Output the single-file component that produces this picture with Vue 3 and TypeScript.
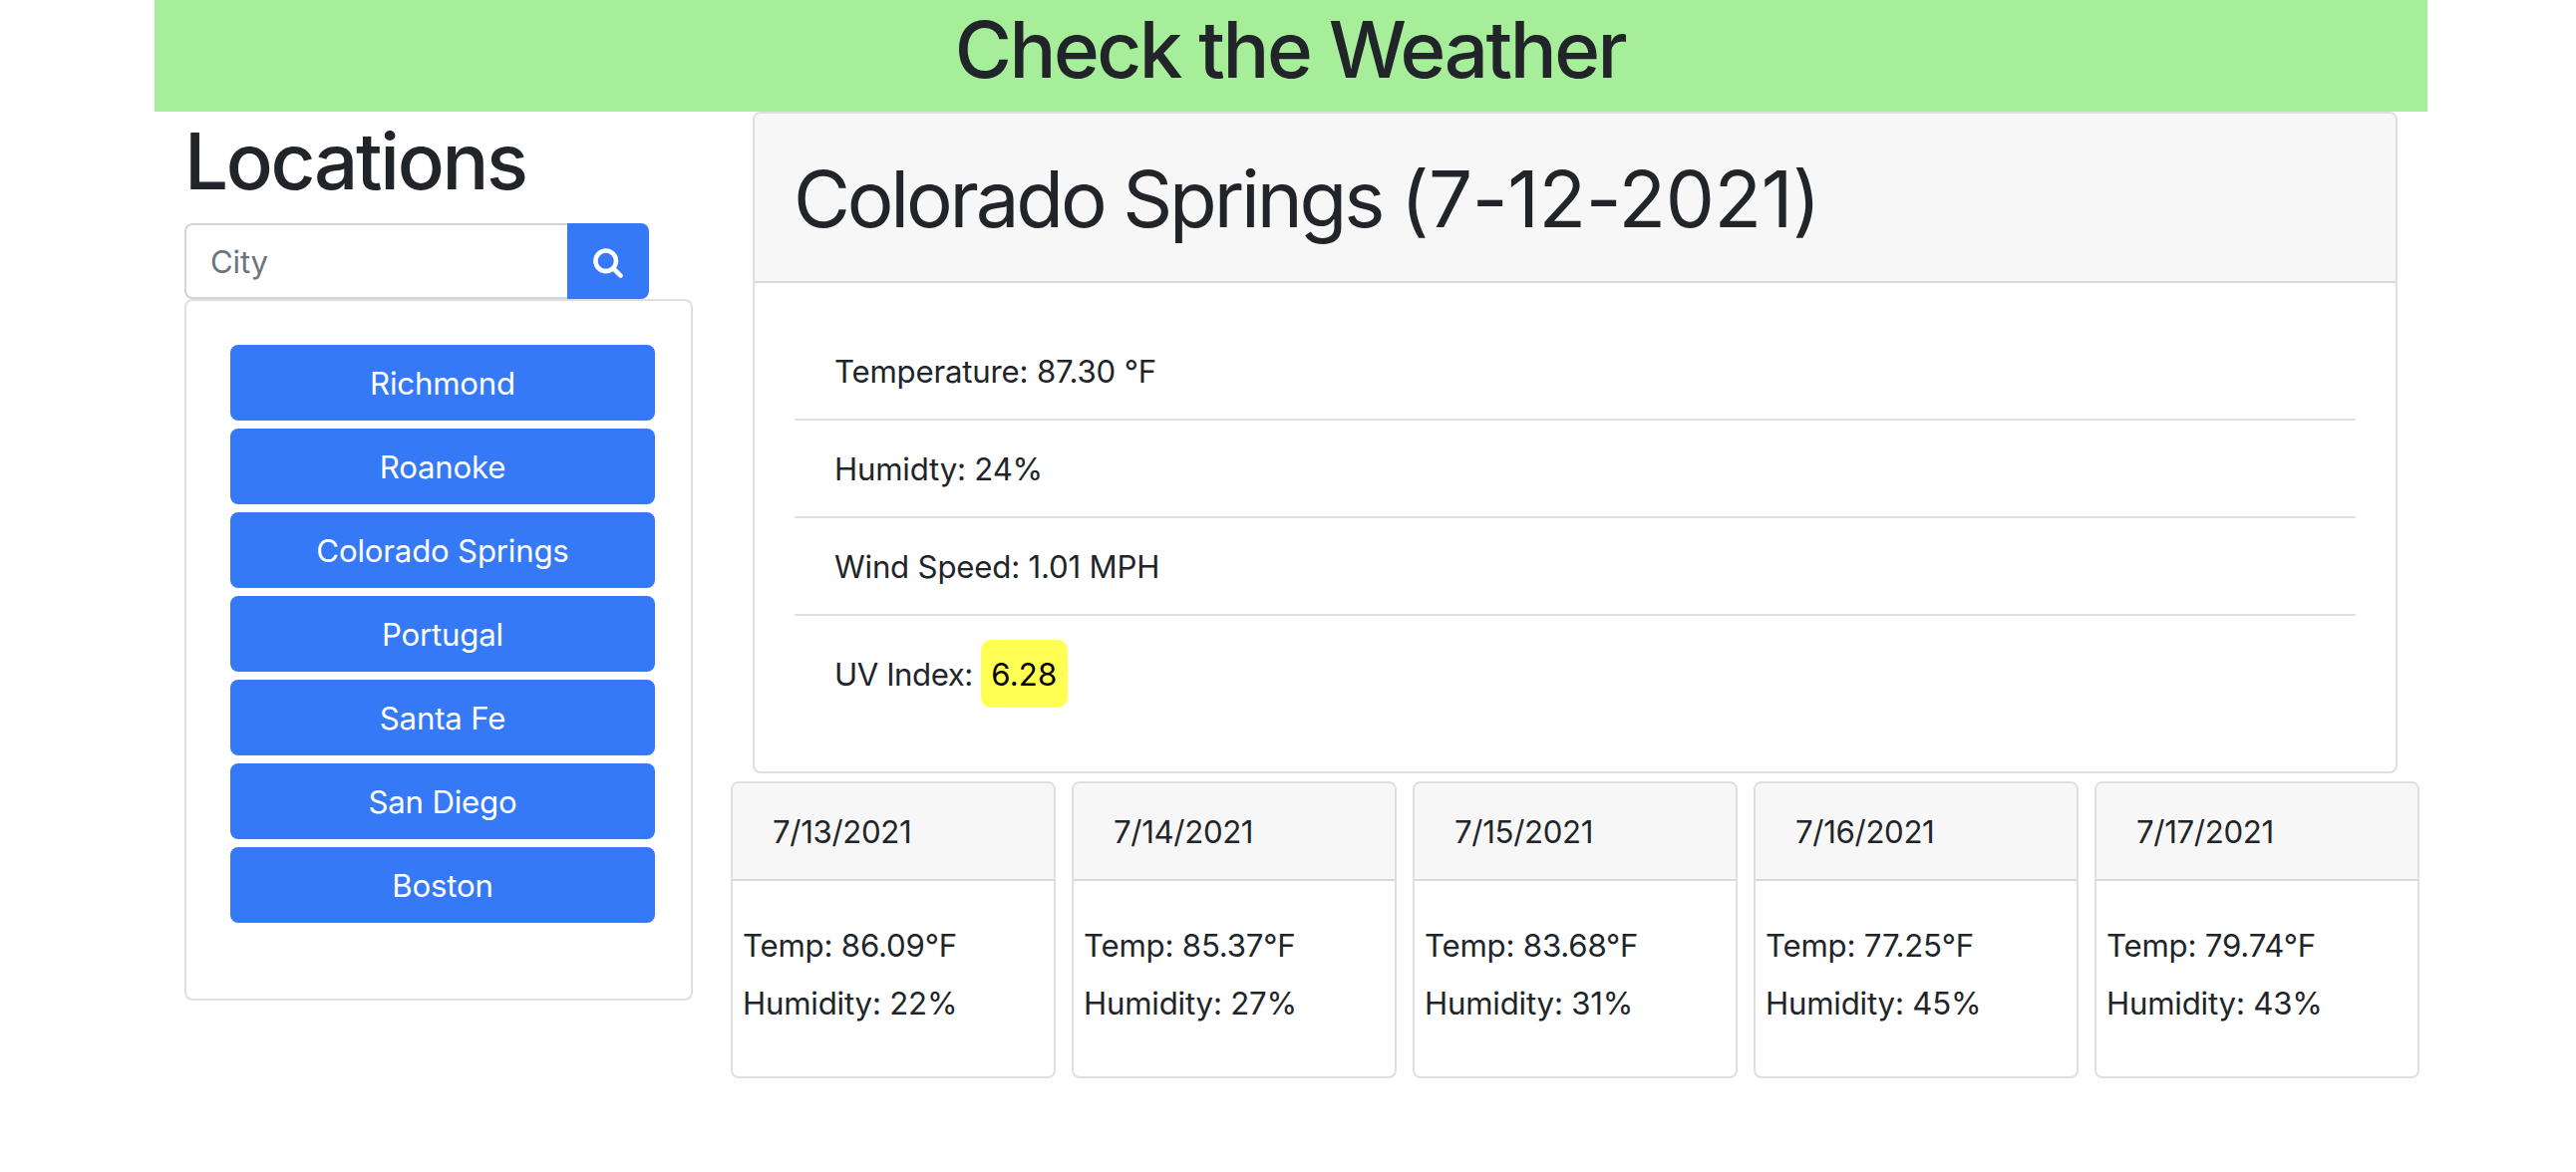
<script setup lang="ts">
interface Reading {
  label: string
  value: string
}

interface ForecastDay {
  date: string
  temp: string
  humidity: string
}

const cities: string[] = [
  'Richmond',
  'Roanoke',
  'Colorado Springs',
  'Portugal',
  'Santa Fe',
  'San Diego',
  'Boston',
]

const currentCity = 'Colorado Springs'
const currentDate = '7-12-2021'

const readings: Reading[] = [
  { label: 'Temperature', value: '87.30 °F' },
  { label: 'Humidty', value: '24%' },
  { label: 'Wind Speed', value: '1.01 MPH' },
]

const uvIndex = '6.28'

const forecast: ForecastDay[] = [
  { date: '7/13/2021', temp: '86.09', humidity: '22' },
  { date: '7/14/2021', temp: '85.37', humidity: '27' },
  { date: '7/15/2021', temp: '83.68', humidity: '31' },
  { date: '7/16/2021', temp: '77.25', humidity: '45' },
  { date: '7/17/2021', temp: '79.74', humidity: '43' },
]
</script>

<template>
  <div class="page">
    <header class="banner">
      <h1>Check the Weather</h1>
    </header>
    <div class="columns">
      <aside class="sidebar">
        <h1 class="locations">Locations</h1>
        <form class="search" @submit.prevent>
          <input type="text" placeholder="City" />
          <button type="submit" aria-label="Search">
            <svg viewBox="0 0 1664 1792" aria-hidden="true">
              <path
                d="M1152 832q0-185-131.5-316.500t-316.500-131.500-316.500 131.500-131.500 316.500 131.500 316.500 316.500 131.500 316.500-131.500 131.500-316.500zM1664 1664q0 52-38 90t-90 38q-54 0-90-38l-343-342q-179 124-399 124-143 0-273.500-55.500t-225-150-150-225-55.500-273.500 55.500-273.500 150-225 225-150 273.500-55.500 273.500 55.500 225 150 150 225 55.500 273.500q0 220-124 399l343 343q37 37 37 90z"
              />
            </svg>
          </button>
        </form>
        <div class="card cities">
          <button v-for="city in cities" :key="city" class="city" type="button">{{ city }}</button>
        </div>
      </aside>
      <main class="content">
        <section class="card current">
          <div class="card-header title">{{ currentCity }} <span class="today">({{ currentDate }})</span></div>
          <ul class="readings">
            <li v-for="item in readings" :key="item.label">{{ item.label }}: {{ item.value }}</li>
            <li class="uv-row">UV Index: <span class="uv">{{ uvIndex }}</span></li>
          </ul>
        </section>
        <section class="forecast">
          <article v-for="day in forecast" :key="day.date" class="card day">
            <div class="card-header date">{{ day.date }}</div>
            <div class="day-body">
              <p>Temp: {{ day.temp }}°F</p>
              <p>Humidity: {{ day.humidity }}%</p>
            </div>
          </article>
        </section>
      </main>
    </div>
  </div>
</template>

<style>
body {
  margin: 0;
  background: #fff;
}
</style>

<style scoped>
* {
  box-sizing: border-box;
}

.page {
  width: 2280px;
  margin-left: 155px;
  font-family: Inter, 'Liberation Sans', sans-serif;
  font-size: 31.2px;
  line-height: 48px;
  letter-spacing: -0.2px;
  color: #212529;
}

h1 {
  height: 96px;
  margin: 0;
  font-size: 78px;
  font-weight: 500;
  line-height: 99px;
  letter-spacing: -2.45px;
}

.locations {
  letter-spacing: -2.3px;
}

.banner {
  height: 112px;
  background: #a6ee99;
  text-align: center;
}

.banner h1 {
  padding-right: 2px;
}

.columns {
  display: flex;
  align-items: flex-start;
}

.sidebar {
  width: 570px;
  padding: 0 30px;
}

.search {
  display: flex;
  width: 466px;
  margin-top: 16px;
}

.search input {
  flex: 1;
  min-width: 0;
  height: 76px;
  padding: 13px 24px 11px;
  border: 2px solid #ced4da;
  border-right: 0;
  border-radius: 8px 0 0 8px;
  background: #fff;
  font: inherit;
  letter-spacing: inherit;
  outline: none;
}

.search input::placeholder {
  color: #6c757d;
  opacity: 1;
}

.search button {
  display: flex;
  align-items: center;
  justify-content: center;
  width: 82px;
  height: 76px;
  padding: 2px 0 0;
  border: 0;
  border-radius: 0 8px 8px 0;
  background: #3579f7;
}

.search svg {
  width: 30px;
  height: 32px;
  fill: #fff;
}

.card {
  border: 2px solid #dfdfdf;
  border-radius: 8px;
  background: #fff;
}

.card-header {
  padding: 25px 40px 23px;
  border-bottom: 2px solid #d8d8d8;
  border-radius: 6px 6px 0 0;
  background: #f7f7f7;
}

.cities {
  display: flex;
  flex-direction: column;
  gap: 8px;
  padding: 44px 34px 76px 44px;
}

.city {
  width: 426px;
  height: 76px;
  padding: 2px 0 0;
  border: 0;
  border-radius: 8px;
  background: #3579f7;
  color: #fff;
  font: inherit;
  letter-spacing: inherit;
  text-align: center;
}

.content {
  flex: 1;
}

.current {
  margin: 0 30px;
}

.title {
  padding: 26px 40px 22px 39px;
  font-size: 78px;
  line-height: 120px;
  letter-spacing: -3.2px;
}

.today {
  letter-spacing: -0.4px;
}

.date {
  letter-spacing: -0.35px;
}

.readings {
  margin: 0;
  padding: 40px;
  list-style: none;
}

.readings li {
  padding: 25px 40px 23px;
  border-bottom: 2px solid #dfdfdf;
}

.readings li.uv-row {
  padding: 24px 40px;
  border-bottom: 0;
  letter-spacing: -0.45px;
}

.uv {
  display: inline-block;
  padding: 11px 10px 9px;
  border-radius: 10px;
  background: #ffff54;
  color: #000;
  letter-spacing: 0.2px;
}

.forecast {
  display: flex;
  gap: 16px;
  padding: 8px;
}

.day {
  flex: 1;
}

.day-body {
  padding: 41px 10px 39px;
}

.day-body p {
  margin: 0 0 10px;
}
</style>
